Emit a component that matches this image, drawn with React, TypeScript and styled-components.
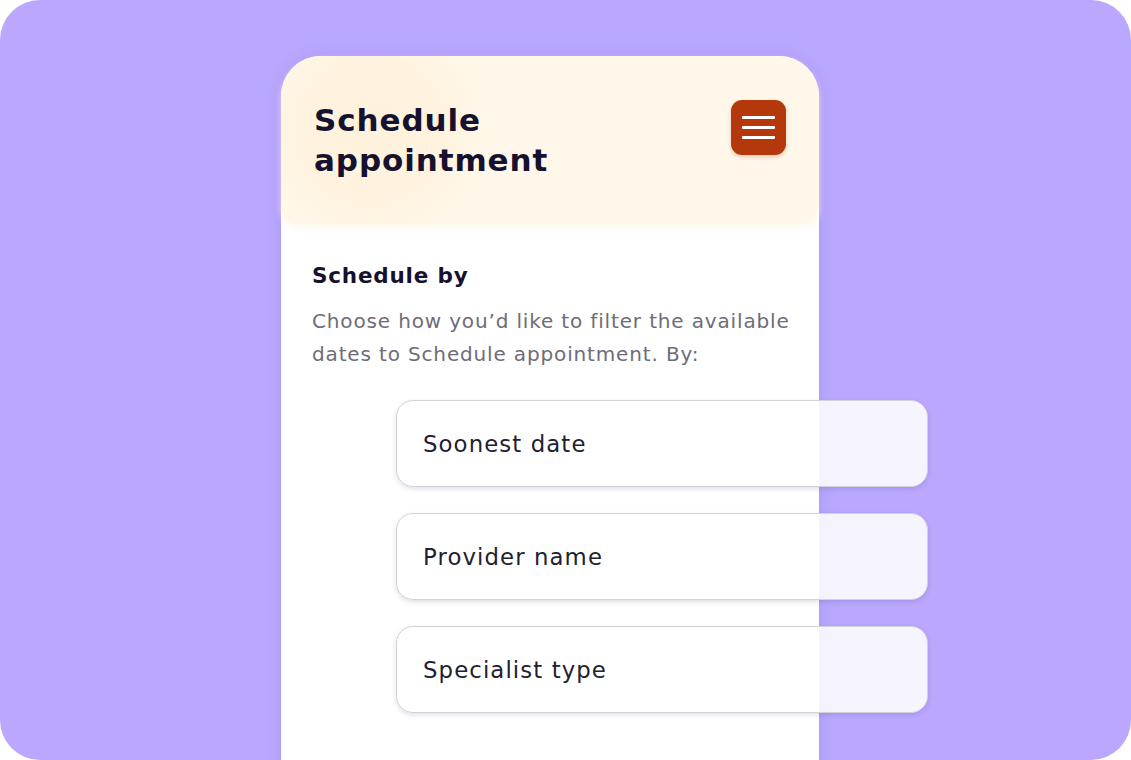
import React from "react";
import styled, { createGlobalStyle } from "styled-components";

const Global = createGlobalStyle`
  html, body { margin: 0; padding: 0; background: #ffffff; }
  * { box-sizing: border-box; }
`;

const Stage = styled.div`
  width: 1131px;
  height: 760px;
  background: #bba8fe;
  border-radius: 40px;
  overflow: hidden;
  padding: 56px 0 0 281px;
  font-family: "DejaVu Sans", "Liberation Sans", sans-serif;
`;

const Phone = styled.div`
  width: 538px;
  min-height: 760px;
  background: #ffffff;
  border-radius: 40px 40px 0 0;
  box-shadow: 0 0 16px rgba(110, 80, 210, 0.22);
  display: flex;
  flex-direction: column;
`;

const Header = styled.header`
  height: 168px;
  border-radius: 40px 40px 18px 18px;
  background:
    radial-gradient(circle at 90px 74px, #fff2dc 0, #fff3e0 75px, rgba(255, 246, 230, 0) 120px),
    #fff8ea;
  box-shadow: 0 3px 6px rgba(255, 244, 226, 0.7);
  display: flex;
  justify-content: space-between;
  align-items: flex-start;
  padding: 44px 33px 0 33px;
`;

const Title = styled.h1`
  margin: 0;
  font-size: 31px;
  line-height: 40px;
  font-weight: 700;
  color: #16112e;
  letter-spacing: 0.9px;
`;

const MenuButton = styled.button`
  width: 55px;
  height: 55px;
  border: none;
  border-radius: 11px;
  background: #b5380d;
  box-shadow: 0 2px 4px rgba(150, 60, 20, 0.25);
  display: flex;
  flex-direction: column;
  justify-content: center;
  align-items: center;
  gap: 7px;
  padding: 0;
`;

const MenuLine = styled.span`
  display: block;
  width: 33px;
  height: 3px;
  border-radius: 1px;
  background: #ffffff;
`;

const Body = styled.section`
  padding: 37px 31px 0 31px;
  display: flex;
  flex-direction: column;
`;

const Subtitle = styled.h2`
  margin: 0;
  font-size: 21.5px;
  line-height: 30px;
  font-weight: 600;
  color: #16112e;
  letter-spacing: 0.8px;
`;

const Paragraph = styled.p`
  margin: 14px 0 0 0;
  font-size: 20px;
  line-height: 33px;
  color: #6e6c78;
  letter-spacing: 0.85px;
  width: 500px;
`;

const Options = styled.div`
  margin: 29px 0 0 84px;
  display: flex;
  flex-direction: column;
  gap: 26px;
`;

const Option = styled.button`
  width: 532px;
  height: 87px;
  border-radius: 17px;
  border: 1.5px solid #d3d2d8;
  background: rgba(255, 255, 255, 0.87);
  box-shadow: 0 2px 5px rgba(40, 30, 80, 0.14);
  text-align: left;
  padding: 0 0 0 26px;
  font-family: "DejaVu Sans", "Liberation Sans", sans-serif;
  font-size: 22.8px;
  letter-spacing: 1.1px;
  color: #22212f;
`;

const options = ["Soonest date", "Provider name", "Specialist type"];

export default function App() {
  return (
    <>
      <Global />
      <Stage>
        <Phone>
          <Header>
            <Title>
              Schedule
              <br />
              appointment
            </Title>
            <MenuButton aria-label="Menu">
              <MenuLine />
              <MenuLine />
              <MenuLine />
            </MenuButton>
          </Header>
          <Body>
            <Subtitle>Schedule by</Subtitle>
            <Paragraph>
              Choose how you’d like to filter the available dates to Schedule appointment. By:
            </Paragraph>
            <Options>
              {options.map((o) => (
                <Option key={o}>{o}</Option>
              ))}
            </Options>
          </Body>
        </Phone>
      </Stage>
    </>
  );
}
